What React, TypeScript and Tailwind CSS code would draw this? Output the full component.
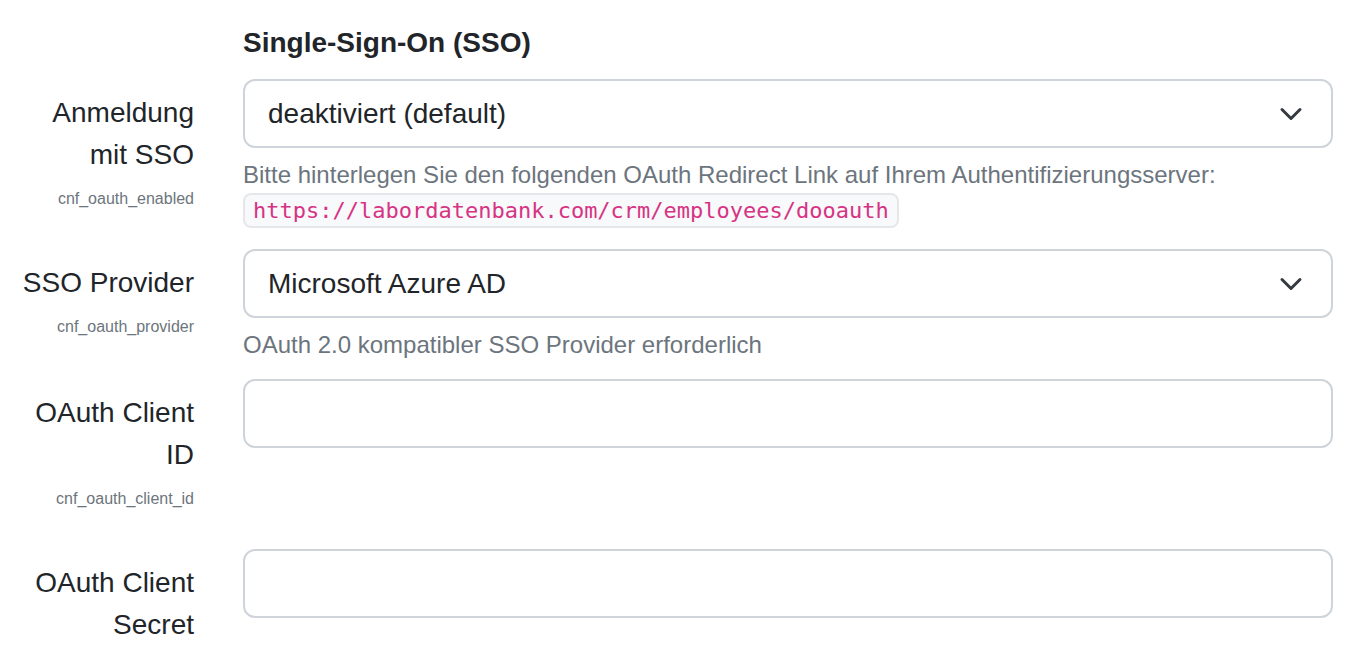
import React from "react";

const Chevron = () => (
  <svg width="24" height="24" viewBox="0 0 16 16" fill="none">
    <path d="m2 5 6 6 6-6" stroke="#343a40" strokeWidth="2" strokeLinecap="round" strokeLinejoin="round" />
  </svg>
);

function Label({ lines, name }: { lines: string[]; name: string }) {
  return (
    <div className="w-[219px] pr-[25px] pt-[13px] text-right">
      {lines.map((l) => (
        <div key={l} className="text-[28px] leading-[42px] text-[#212529]">
          {l}
        </div>
      ))}
      <div className="mt-[11px] text-[16px] leading-[24px] text-[#6c757d]">{name}</div>
    </div>
  );
}

function Select({ value }: { value: string }) {
  return (
    <div className="flex h-[69px] items-center justify-between rounded-[12px] border-2 border-[#ced4da] bg-white pl-[23px] pr-[28px]">
      <span className="text-[28px] leading-[42px] text-[#212529]">{value}</span>
      <Chevron />
    </div>
  );
}

function Input() {
  return <div className="h-[69px] rounded-[12px] border-2 border-[#ced4da] bg-white" />;
}

export default function App() {
  return (
    <div
      className="h-[656px] w-[1352px] overflow-hidden bg-white"
      style={{ fontFamily: '"Liberation Sans", Arial, Helvetica, sans-serif' }}
    >
      <div className="flex pt-[26px]">
        <div className="w-[219px]" />
        <div className="flex-1 pl-[24px] pr-[19px]">
          <h3 className="text-[28px] font-bold leading-[34px] text-[#212529]">Single-Sign-On (SSO)</h3>
        </div>
      </div>

      <div className="mt-[19px] flex">
        <Label lines={["Anmeldung", "mit SSO"]} name="cnf_oauth_enabled" />
        <div className="flex-1 pl-[24px] pr-[19px]">
          <Select value="deaktiviert (default)" />
          <div className="mt-[8px] text-[24px] leading-[37px] text-[#6c757d]">
            Bitte hinterlegen Sie den folgenden OAuth Redirect Link auf Ihrem Authentifizierungsserver:
          </div>
          <div
            className="inline-block h-[35px] rounded-[8px] border-2 border-[#e5e7eb] bg-[#f8f9fa] px-[8px] text-[22px] leading-[31px] text-[#d63384]"
            style={{ fontFamily: '"DejaVu Sans Mono", "Liberation Mono", monospace' }}
          >
            https://labordatenbank.com/crm/employees/dooauth
          </div>
        </div>
      </div>

      <div className="mt-[21px] flex">
        <Label lines={["SSO Provider"]} name="cnf_oauth_provider" />
        <div className="flex-1 pl-[24px] pr-[19px]">
          <Select value="Microsoft Azure AD" />
          <div className="mt-[8px] text-[24px] leading-[37px] text-[#6c757d]">
            OAuth 2.0 kompatibler SSO Provider erforderlich
          </div>
        </div>
      </div>

      <div className="mt-[16px] flex">
        <Label lines={["OAuth Client", "ID"]} name="cnf_oauth_client_id" />
        <div className="flex-1 pl-[24px] pr-[19px]">
          <Input />
        </div>
      </div>

      <div className="mt-[38px] flex">
        <Label lines={["OAuth Client", "Secret"]} name="cnf_oauth_client_secret" />
        <div className="flex-1 pl-[24px] pr-[19px]">
          <Input />
        </div>
      </div>
    </div>
  );
}
